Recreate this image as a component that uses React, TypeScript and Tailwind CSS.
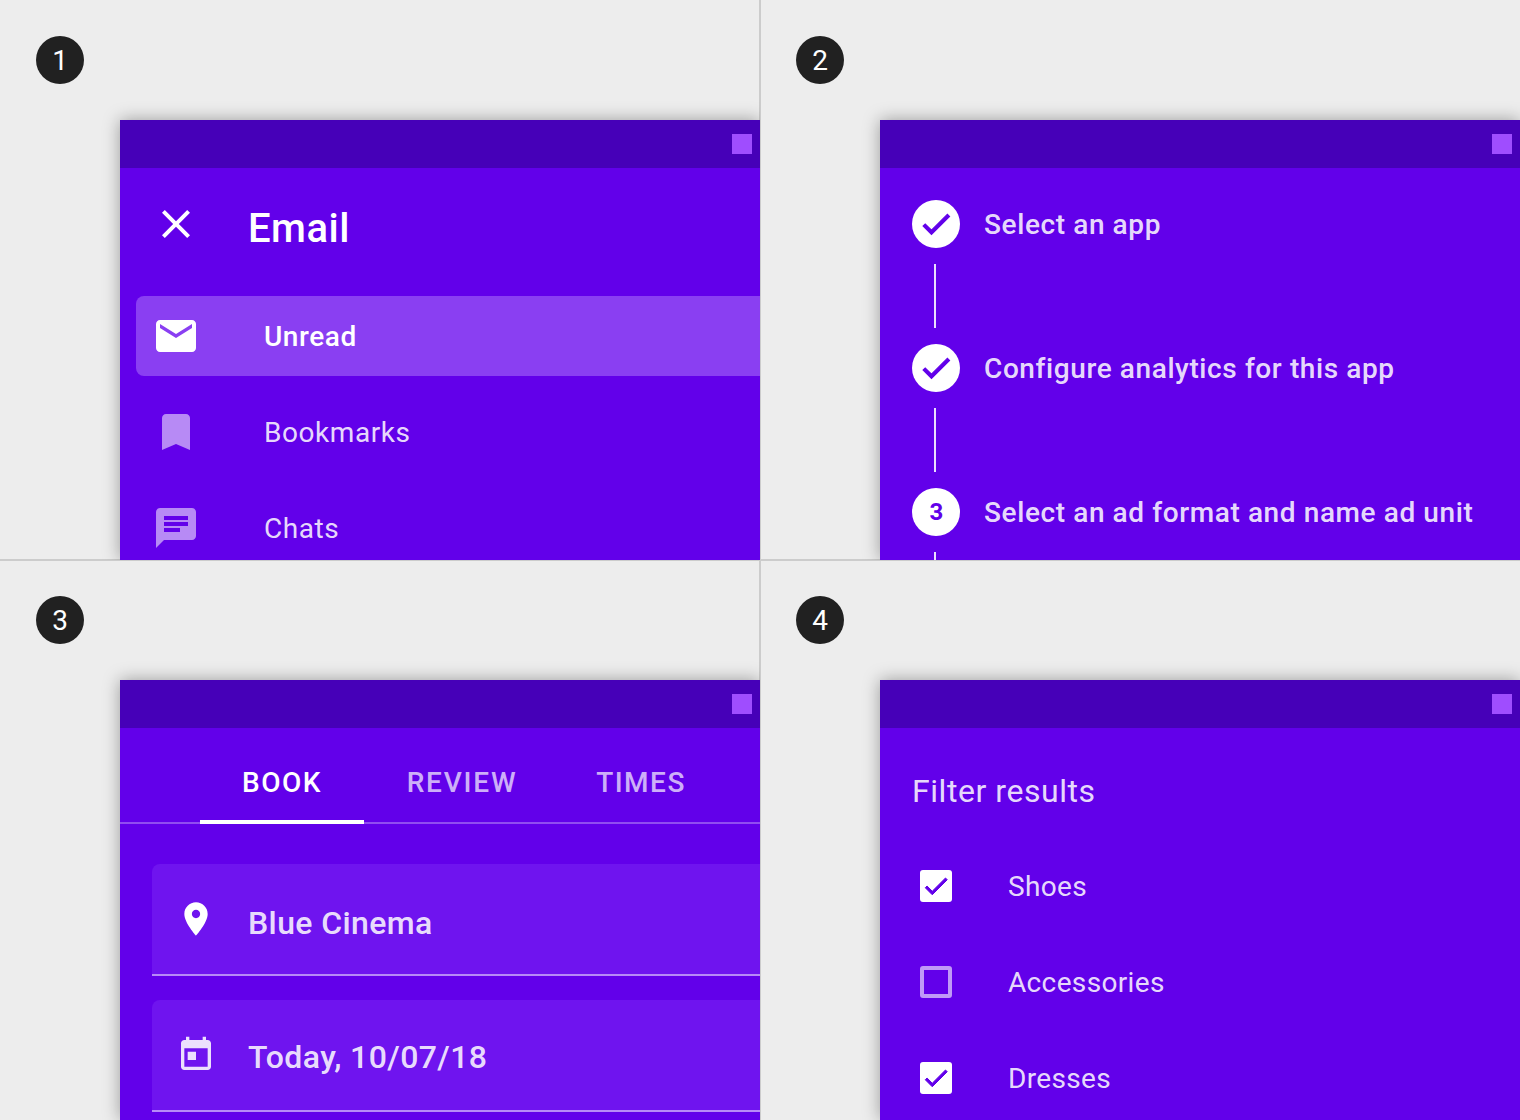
const CLOSE = "M19 6.41L17.59 5 12 10.59 6.41 5 5 6.41 10.59 12 5 17.59 6.41 19 12 13.41 17.59 19 19 17.59 13.41 12z";
const MAIL = "M20 4H4c-1.1 0-1.99.9-1.99 2L2 18c0 1.1.9 2 2 2h16c1.1 0 2-.9 2-2V6c0-1.1-.9-2-2-2zm0 4l-8 5-8-5V6l8 5 8-5v2z";
const BOOKMARK = "M17 3H7c-1.1 0-1.99.9-1.99 2L5 21l7-3 7 3V5c0-1.1-.9-2-2-2z";
const CHAT = "M20 2H4c-1.1 0-1.99.9-1.99 2L2 22l4-4h14c1.1 0 2-.9 2-2V4c0-1.1-.9-2-2-2zM6 9h12v2H6V9zm8 5H6v-2h8v2zm4-6H6V6h12v2z";
const CHECK = "M9 16.17L4.83 12l-1.41 1.41L9 19 21 7l-1.41-1.41z";
const PLACE = "M12 2C8.13 2 5 5.13 5 9c0 5.25 7 13 7 13s7-7.75 7-13c0-3.87-3.13-7-7-7zm0 9.5c-1.38 0-2.5-1.12-2.5-2.5s1.12-2.5 2.5-2.5 2.5 1.12 2.5 2.5-1.12 2.5-2.5 2.5z";
const TODAY = "M19 3h-1V1h-2v2H8V1H6v2H5c-1.11 0-1.99.9-1.99 2L3 19c0 1.1.89 2 2 2h14c1.1 0 2-.9 2-2V5c0-1.1-.9-2-2-2zm0 16H5V8h14v11zM7 10h5v5H7z";

function Icon({ d, className }: { d: string; className: string }) {
  return (
    <svg viewBox="0 0 24 24" fill="currentColor" className={`shrink-0 ${className}`}>
      <path d={d} fillRule="evenodd" />
    </svg>
  );
}

// the reference's tick is heavier than the stock path
function Tick({ className }: { className: string }) {
  return (
    <svg viewBox="0 0 24 24" fill="currentColor" stroke="currentColor" strokeWidth="0.8" className={`shrink-0 ${className}`}>
      <path d={CHECK} />
    </svg>
  );
}

function Cell({ n, children }: { n: number; children: React.ReactNode }) {
  return (
    <div className="relative h-[560px] overflow-hidden pl-9 pt-9">
      <div className="flex h-12 w-12 items-center justify-center rounded-full bg-[#212121] pt-0.5 text-[28px] text-white">{n}</div>
      <div className="ml-[84px] mt-9 h-[440px] bg-[#6200ea] shadow-[0_0_16px_rgba(0,0,0,0.35)]">
        <div className="flex h-12 items-center justify-end bg-[#4600b8] pr-2">
          <div className="h-5 w-5 bg-[#9f4dff]" />
        </div>
        {children}
      </div>
    </div>
  );
}

function NavRow({ d, label, active }: { d: string; label: string; active?: boolean }) {
  return (
    <div className={`ml-4 mb-4 flex h-20 items-center rounded-l-lg pl-4 ${active ? "bg-[#8a3ff2] text-white" : "text-white/54"}`}>
      <Icon d={d} className="h-12 w-12" />
      <span className={`ml-16 pt-0.5 text-[28px] tracking-[0.55px] ${active ? "font-[480] text-white" : "text-white/87"}`}>{label}</span>
    </div>
  );
}

function EmailPanel() {
  return (
    <div>
      <div className="flex h-[128px] items-start pl-8 pt-8 text-white">
        <Icon d={CLOSE} className="h-12 w-12" />
        <span className="ml-12 mt-1 text-[40px] font-medium leading-[50px] tracking-[0.5px]">Email</span>
      </div>
      <NavRow d={MAIL} label="Unread" active />
      <NavRow d={BOOKMARK} label="Bookmarks" />
      <NavRow d={CHAT} label="Chats" />
    </div>
  );
}

function Step({ mark, label }: { mark: React.ReactNode; label: string }) {
  return (
    <div className="flex h-12 items-center">
      <div className="flex h-12 w-12 items-center justify-center rounded-full bg-white text-[#6200ea]">{mark}</div>
      <span className="ml-6 pt-0.5 text-[28px] font-[480] tracking-[0.6px] text-white/87">{label}</span>
    </div>
  );
}

function Connector() {
  return <div className="my-4 ml-[22px] h-16 w-[2px] bg-white/87" />;
}

function StepperPanel() {
  const done = <Tick className="h-9 w-9" />;
  return (
    <div className="pl-8 pt-8">
      <Step mark={done} label="Select an app" />
      <Connector />
      <Step mark={done} label="Configure analytics for this app" />
      <Connector />
      <Step mark={<span className="pl-px text-2xl font-bold">3</span>} label="Select an ad format and name ad unit" />
      <Connector />
    </div>
  );
}

function Field({ d, label, iconClass, textClass }: { d: string; label: string; iconClass: string; textClass: string }) {
  return (
    <div className="mb-6 ml-8 mr-[-8px] flex h-[112px] items-center rounded-t-lg border-b-2 border-white/50 bg-[#6f14ef] pl-6">
      <Icon d={d} className={`h-10 w-10 ${iconClass}`} />
      <span className={`ml-8 text-[32px] font-[480] leading-10 tracking-[0.4px] text-white/87 ${textClass}`}>{label}</span>
    </div>
  );
}

function BookingPanel() {
  return (
    <div>
      <div className="mb-10 flex h-24 border-b-2 border-white/30 pl-20">
        <div className="flex h-24 w-[164px] items-center justify-center border-b-4 border-white pt-[18px] text-[28px] font-[480] tracking-[1.5px] text-white">BOOK</div>
        <div className="flex h-24 w-[194px] items-center justify-center pl-[2px] pt-[14px] text-[28px] font-[480] tracking-[1.8px] text-white/70">REVIEW</div>
        <div className="flex h-24 w-[166px] items-center justify-center pt-[14px] text-[28px] font-[480] tracking-[1.5px] text-white/70">TIMES</div>
      </div>
      <Field d={PLACE} label="Blue Cinema" iconClass="text-white" textClass="pt-2" />
      <Field d={TODAY} label="Today, 10/07/18" iconClass="text-white/87" textClass="pt-1" />
    </div>
  );
}

function CheckRow({ label, checked }: { label: string; checked?: boolean }) {
  return (
    <div className="flex h-24 items-center pl-10">
      {checked ? (
        <div className="flex h-8 w-8 items-center justify-center rounded-[3px] bg-white text-[#6200ea]">
          <Tick className="h-[30px] w-[30px]" />
        </div>
      ) : (
        <div className="h-8 w-8 rounded-[3px] border-4 border-white/60" />
      )}
      <span className="ml-14 pt-0.5 text-[28px] tracking-[0.35px] text-white/87">{label}</span>
    </div>
  );
}

function FilterPanel() {
  return (
    <div>
      <div className="h-[110px] pl-8 pt-[43px] text-[32px] leading-10 tracking-[0.55px] text-white/87">Filter results</div>
      <CheckRow label="Shoes" checked />
      <CheckRow label="Accessories" />
      <CheckRow label="Dresses" checked />
    </div>
  );
}

export default function App() {
  return (
    <div className="relative h-[1120px] w-[1520px] overflow-hidden bg-[#ededed] font-['Roboto',sans-serif]">
      {/* divider lines sit under the cells */}
      <div className="absolute left-[759px] top-0 h-full w-[2px] bg-[#cccccc]" />
      <div className="absolute left-0 top-[559px] h-[2px] w-full bg-[#cccccc]" />
      <div className="grid grid-cols-2">
        <Cell n={1}><EmailPanel /></Cell>
        <Cell n={2}><StepperPanel /></Cell>
        <Cell n={3}><BookingPanel /></Cell>
        <Cell n={4}><FilterPanel /></Cell>
      </div>
    </div>
  );
}
